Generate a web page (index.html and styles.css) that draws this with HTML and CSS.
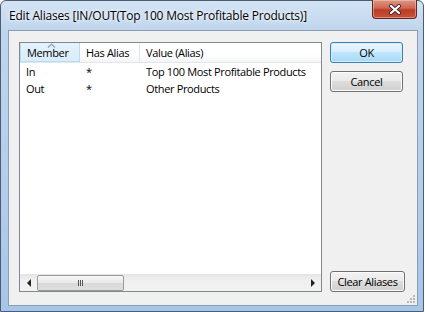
FILE: index.html
```html
<!DOCTYPE html>
<html lang="en">
<head>
    <meta charset="UTF-8">
    <title>Edit Aliases</title>
    <link rel="stylesheet" href="styles.css">
</head>
<body>
    <div class="window">
        <div class="titlebar">
            <span class="title">Edit Aliases [IN/OUT(Top 100 Most Profitable Products)]</span>
            <div class="close-btn">
                <svg width="14" height="11" viewBox="0 0 14 11">
                    <path d="M3 2 L11 9 M11 2 L3 9" stroke="#3b2a2a" stroke-width="4" stroke-linecap="round"/>
                    <path d="M3 2 L11 9 M11 2 L3 9" stroke="#fff" stroke-width="2.2" stroke-linecap="round"/>
                </svg>
            </div>
        </div>
        <div class="client">
            <div class="list">
                <div class="list-head">
                    <div class="hcell col-member sorted">
                        <svg class="sort-arrow" width="9" height="5" viewBox="0 0 9 5">
                            <path d="M1 4.5 L4.5 1 L8 4.5" fill="none" stroke="#8aa2bf" stroke-width="1.2"/>
                        </svg>
                        Member
                    </div>
                    <div class="hcell col-alias">Has Alias</div>
                    <div class="hcell col-value">Value (Alias)</div>
                </div>
                <div class="list-body">
                    <div class="row">
                        <span class="cell col-member">In</span>
                        <span class="cell col-alias">*</span>
                        <span class="cell col-value">Top 100 Most Profitable Products</span>
                    </div>
                    <div class="row">
                        <span class="cell col-member">Out</span>
                        <span class="cell col-alias">*</span>
                        <span class="cell col-value">Other Products</span>
                    </div>
                </div>
                <div class="hscroll">
                    <div class="arrow-btn"><span class="tri tri-left"></span></div>
                    <div class="track">
                        <div class="thumb"><span class="thumb-grip"></span></div>
                    </div>
                    <div class="arrow-btn"><span class="tri tri-right"></span></div>
                </div>
            </div>
            <div class="buttons">
                <button class="btn btn-default">OK</button>
                <button class="btn">Cancel</button>
                <button class="btn btn-clear">Clear Aliases</button>
            </div>
            <svg class="size-grip" width="8" height="8" viewBox="0 0 8 8">
                <rect x="6" y="0" width="2" height="2" fill="#b8b8b8"/>
                <rect x="3" y="3" width="2" height="2" fill="#b8b8b8"/>
                <rect x="6" y="3" width="2" height="2" fill="#b8b8b8"/>
                <rect x="0" y="6" width="2" height="2" fill="#b8b8b8"/>
                <rect x="3" y="6" width="2" height="2" fill="#b8b8b8"/>
                <rect x="6" y="6" width="2" height="2" fill="#b8b8b8"/>
            </svg>
        </div>
    </div>
</body>
</html>
```

FILE: styles.css
```css
body {
    margin: 0;
    padding: 0;
    background-color: #fff;
    font-family: "Open Sans", "Noto Sans", sans-serif;
    font-size: 11px;
    letter-spacing: -0.35px;
    color: #000;
}
.window {
    width: 424px;
    height: 312px;
    box-sizing: border-box;
    border: 1px solid #4a5d75;
    border-radius: 6px 6px 0 0;
    background: linear-gradient(#d3e3f4, #bfd5ed 30px, #b4cdea 60%, #a7c5e8);
    padding: 0 5px 5px 7px;
    display: flex;
    flex-direction: column;
}
.titlebar {
    height: 29px;
    display: flex;
    align-items: center;
    justify-content: space-between;
}
.title {
    padding-left: 1px;
    font-size: 12px;
    letter-spacing: -0.2px;
    text-shadow: 0 0 6px #fff, 0 0 3px #fff;
}
.close-btn {
    align-self: flex-start;
    margin-top: -1px;
    margin-right: 1px;
    width: 43px;
    height: 18px;
    border: 1px solid #5b2a24;
    border-top: none;
    border-radius: 0 0 4px 4px;
    background: linear-gradient(#dc9885, #cf6650 45%, #bb3c25 55%, #c9533a);
    box-shadow: inset 0 0 0 1px rgba(255, 210, 200, 0.45);
    display: flex;
    align-items: center;
    justify-content: center;
}
.client {
    flex: 1;
    position: relative;
    display: flex;
    gap: 8px;
    border: 1px solid #8b9db3;
    background-color: #f0f0f0;
    padding: 11px 12px 13px 10px;
}
.list {
    width: 303px;
    box-sizing: border-box;
    border: 1px solid #828790;
    background-color: #fff;
    display: flex;
    flex-direction: column;
}
.list-head {
    display: flex;
    height: 20px;
    box-sizing: border-box;
    border-bottom: 1px solid #e2e5ea;
}
.hcell {
    position: relative;
    box-sizing: border-box;
    padding-left: 6px;
    line-height: 19px;
    border-right: 1px solid #e3e6ea;
    background: linear-gradient(#fff 60%, #f4f5f7);
}
.hcell.sorted {
    background: linear-gradient(#e3f2fc, #d9edfa);
    border: 1px solid #b9dcf3;
    border-top: none;
    line-height: 20px;
}
.sort-arrow {
    position: absolute;
    left: 26px;
    top: 0;
}
.col-member {
    width: 60px;
}
.col-alias {
    width: 60px;
}
.col-value {
    flex: 1;
    border-right: none;
}
.list-body {
    flex: 1;
}
.row {
    display: flex;
    height: 17px;
    line-height: 17px;
}
.cell {
    box-sizing: border-box;
    padding-left: 6px;
    white-space: nowrap;
}
.hscroll {
    height: 17px;
    display: flex;
    background: linear-gradient(#e5e5e5, #f0f0f0 40%, #f2f2f2);
}
.arrow-btn {
    width: 17px;
    display: flex;
    align-items: center;
    justify-content: center;
}
.tri {
    width: 0;
    height: 0;
    border-top: 4px solid transparent;
    border-bottom: 4px solid transparent;
}
.tri-left {
    border-right: 4px solid #222;
}
.tri-right {
    border-left: 4px solid #222;
}
.track {
    flex: 1;
    display: flex;
    align-items: center;
}
.thumb {
    width: 85px;
    height: 14px;
    border: 1px solid #9a9a9a;
    border-radius: 2px;
    background: linear-gradient(#f6f6f6, #e9e9e9 50%, #d9d9d9 51%, #dedede);
    display: flex;
    align-items: center;
    justify-content: center;
}
.thumb-grip {
    width: 5px;
    height: 6px;
    background: linear-gradient(90deg, #555 1px, transparent 1px, transparent 2px, #555 2px, #555 3px, transparent 3px, transparent 4px, #555 4px);
}
.buttons {
    display: flex;
    flex-direction: column;
    gap: 8px;
}
.btn {
    width: 73px;
    height: 21px;
    box-sizing: border-box;
    border: 1px solid #707070;
    border-radius: 3px;
    background: linear-gradient(#f2f2f2, #ebebeb 45%, #dddddd 50%, #cfcfcf);
    box-shadow: inset 0 0 0 1px #fcfcfc;
    font-family: inherit;
    font-size: 11px;
    letter-spacing: inherit;
    color: #000;
    padding: 0;
}
.btn-default {
    border-color: #3c7fb1;
    background: linear-gradient(#eaf6fd, #d9f0fc 45%, #bee6fd 50%, #a7d9f5);
    box-shadow: inset 0 0 0 1px #d4ecfa;
}
.btn-clear {
    margin-top: auto;
    width: 75px;
}
.size-grip {
    position: absolute;
    right: 2px;
    bottom: 2px;
}
```
